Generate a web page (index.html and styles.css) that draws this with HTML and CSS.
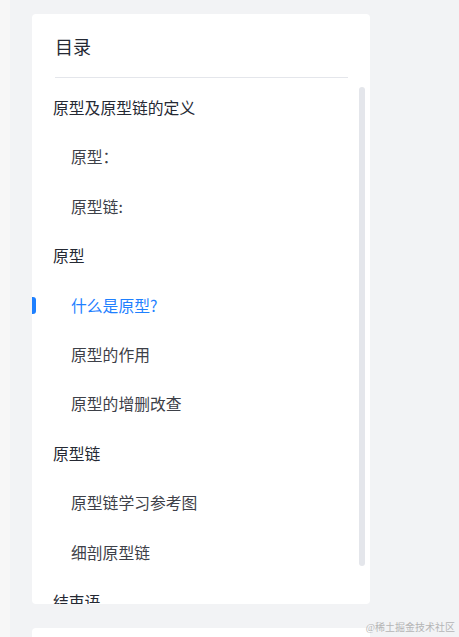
FILE: index.html
```html
<!DOCTYPE html>
<html>
<head>
  <title>目录</title>
  <link rel="stylesheet" href="styles.css">
</head>
<body>
  <div class="main">
    <div class="catalogCard">
      <div class="catalogTitle">目录</div>
      <div class="catalogList">
        <div class="item level1">原型及原型链的定义</div>
        <div class="item level2">原型：</div>
        <div class="item level2">原型链:</div>
        <div class="item level1">原型</div>
        <div class="item level2 active">什么是原型?</div>
        <div class="item level2">原型的作用</div>
        <div class="item level2">原型的增删改查</div>
        <div class="item level1">原型链</div>
        <div class="item level2">原型链学习参考图</div>
        <div class="item level2">细剖原型链</div>
        <div class="item level1">结束语</div>
      </div>
      <div class="scrollThumb"></div>
    </div>
    <div class="nextCard"></div>
  </div>
  <div class="watermark">@稀土掘金技术社区</div>
</body>
</html>
```

FILE: styles.css
```css
html, body {
  margin: 0;
  height: 100%;
}

body {
  background-color: #f7f7f7;
  font-family: "Noto Sans CJK SC", "Noto Sans", sans-serif;
  overflow: hidden;
  position: relative;
}

.main {
  margin-left: 10px;
  height: 100%;
  background-color: #f2f3f5;
  padding: 14px 0 0 22px;
  box-sizing: border-box;
}

.catalogCard {
  position: relative;
  width: 338px;
  height: 590px;
  background-color: #fff;
  border-radius: 4px;
  overflow: hidden;
}

.catalogTitle {
  margin: 0 22px 0 23px;
  padding: 20px 0 19px;
  font-size: 18px;
  line-height: 24px;
  color: #252933;
  border-bottom: 1px solid #e4e6eb;
}

.catalogList {
  padding-top: 5px;
}

.item {
  position: relative;
  height: 49.4px;
  line-height: 49.4px;
  font-size: 15.8px;
  white-space: nowrap;
}

.level1 {
  padding-left: 21px;
  color: #252933;
}

.level2 {
  padding-left: 39px;
  color: #3d4048;
}

.active {
  color: #1e80ff;
}

.active::before {
  content: "";
  position: absolute;
  left: 0;
  top: 16px;
  width: 4px;
  height: 17px;
  background-color: #1e80ff;
  border-radius: 0 3px 3px 0;
}

.scrollThumb {
  position: absolute;
  left: 327px;
  top: 73px;
  width: 6px;
  height: 479px;
  background-color: #e4e6eb;
  border-radius: 3px;
}

.nextCard {
  margin-top: 24px;
  width: 338px;
  height: 40px;
  background-color: #fff;
  border-radius: 4px;
}

.watermark {
  position: absolute;
  right: 4px;
  bottom: 3px;
  font-family: "Liberation Serif", "Noto Sans CJK SC", serif;
  font-size: 10px;
  color: #b5b5b5;
}
```
